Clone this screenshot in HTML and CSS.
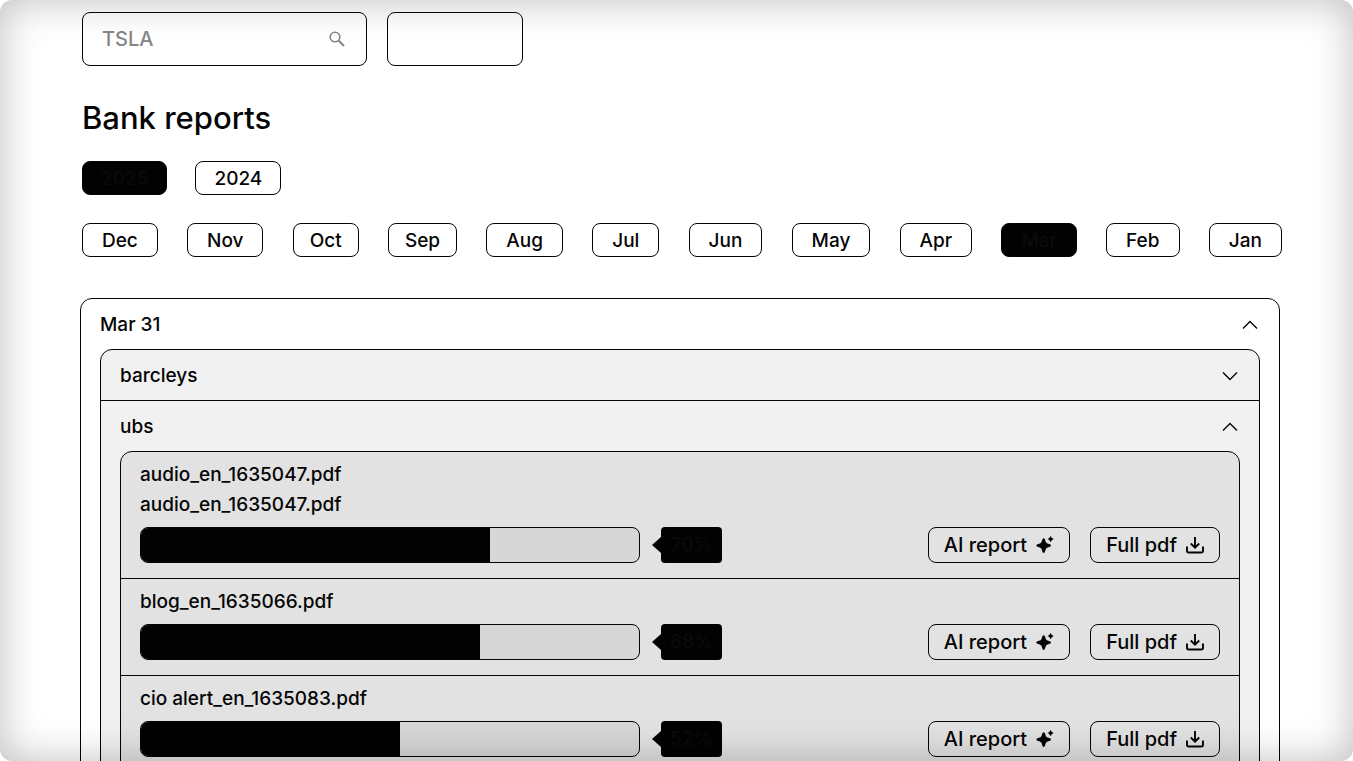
FILE: index.html
```html
<!DOCTYPE html>
<html lang="en">
<head>
    <meta charset="UTF-8">
    <meta name="viewport" content="width=device-width, initial-scale=1.0">
    <title>Bank reports</title>
    <link rel="stylesheet" href="styles.css">
</head>
<body>
    <!-- shared icons -->
    <svg class="sprite" aria-hidden="true">
        <symbol id="icon-chevron" viewBox="0 0 18 18">
            <path d="M2 12.5 L9 5.5 L16 12.5" fill="none" stroke="currentColor" stroke-width="1.4"/>
        </symbol>
        <symbol id="icon-sparkle" viewBox="0 0 18 18">
            <path d="M7.7 2.2 C9.3 2.2 9.2 5.4 10.4 6.7 C11.6 7.9 15 7.8 15 9.5 C15 11.2 11.6 11.1 10.4 12.3 C9.2 13.5 9.3 17 7.7 17 C6.1 17 6.2 13.5 5 12.3 C3.8 11.1 0.4 11.2 0.4 9.5 C0.4 7.8 3.8 7.9 5 6.7 C6.2 5.4 6.1 2.2 7.7 2.2 Z" fill="currentColor"/>
            <path d="M14.6 0.3 C15.4 0.3 15.3 1.6 15.8 2.1 C16.3 2.6 17.4 2.4 17.4 3.1 C17.4 3.8 16.3 3.7 15.8 4.2 C15.3 4.7 15.4 5.8 14.6 5.8 C13.8 5.8 13.9 4.7 13.4 4.2 C12.9 3.7 11.8 3.8 11.8 3.1 C11.8 2.4 12.9 2.6 13.4 2.1 C13.9 1.6 13.8 0.3 14.6 0.3 Z" fill="currentColor"/>
        </symbol>
        <symbol id="icon-download" viewBox="0 0 18 18">
            <path d="M9 1 V11.5 M4.8 7.5 L9 11.7 L13.2 7.5 M1 10.5 V15 Q1 16.5 2.7 16.5 H15.3 Q17 16.5 17 15 V10.5" fill="none" stroke="currentColor" stroke-width="1.9"/>
        </symbol>
    </svg>

    <main class="page">
        <div class="filters">
            <form class="search">
                <label class="search-box">
                    <input type="text" name="ticker" placeholder="TSLA" aria-label="Ticker">
                    <svg class="search-icon" viewBox="0 0 16 16" aria-hidden="true">
                        <circle cx="6" cy="6" r="4.8" fill="none" stroke="currentColor" stroke-width="1.6"/>
                        <path d="M9.5 9.5 L15 15" fill="none" stroke="currentColor" stroke-width="1.9"/>
                    </svg>
                </label>
                <button class="search-btn" type="submit" aria-label="Search"></button>
            </form>

            <h1>Bank reports</h1>

            <div class="years">
                <button class="chip active">2025</button>
                <button class="chip">2024</button>
            </div>

            <div class="months">
                <button class="chip">Dec</button>
                <button class="chip">Nov</button>
                <button class="chip narrow">Oct</button>
                <button class="chip narrow">Sep</button>
                <button class="chip">Aug</button>
                <button class="chip">Jul</button>
                <button class="chip">Jun</button>
                <button class="chip">May</button>
                <button class="chip">Apr</button>
                <button class="chip active">Mar</button>
                <button class="chip">Feb</button>
                <button class="chip">Jan</button>
            </div>
        </div>

        <section class="panel day">
            <button class="panel-header">Mar 31 <svg class="chevron"><use href="#icon-chevron"/></svg></button>

            <div class="panel banks">
                <button class="panel-header">barcleys <svg class="chevron down"><use href="#icon-chevron"/></svg></button>

                <div class="bank">
                    <button class="panel-header">ubs <svg class="chevron"><use href="#icon-chevron"/></svg></button>

                    <div class="panel reports">
                        <article class="report">
                            <p>audio_en_1635047.pdf</p>
                            <p>audio_en_1635047.pdf</p>
                            <div class="report-row">
                                <div class="bar"><div class="bar-fill" style="width: 70%"></div></div>
                                <span class="percent">70%</span>
                                <div class="actions">
                                    <button class="action">AI report <svg class="icon"><use href="#icon-sparkle"/></svg></button>
                                    <button class="action">Full pdf <svg class="icon"><use href="#icon-download"/></svg></button>
                                </div>
                            </div>
                        </article>

                        <article class="report">
                            <p>blog_en_1635066.pdf</p>
                            <div class="report-row">
                                <div class="bar"><div class="bar-fill" style="width: 68%"></div></div>
                                <span class="percent">68%</span>
                                <div class="actions">
                                    <button class="action">AI report <svg class="icon"><use href="#icon-sparkle"/></svg></button>
                                    <button class="action">Full pdf <svg class="icon"><use href="#icon-download"/></svg></button>
                                </div>
                            </div>
                        </article>

                        <article class="report">
                            <p>cio alert_en_1635083.pdf</p>
                            <div class="report-row">
                                <div class="bar"><div class="bar-fill" style="width: 52%"></div></div>
                                <span class="percent">52%</span>
                                <div class="actions">
                                    <button class="action">AI report <svg class="icon"><use href="#icon-sparkle"/></svg></button>
                                    <button class="action">Full pdf <svg class="icon"><use href="#icon-download"/></svg></button>
                                </div>
                            </div>
                        </article>
                    </div>
                </div>
            </div>
        </section>
    </main>
    <div class="vignette"></div>
</body>
</html>
```
FILE: styles.css
```css
* {
    margin: 0;
    padding: 0;
    box-sizing: border-box;
}

html {
    scrollbar-width: none;
}

body {
    font-family: Inter, sans-serif;
    font-size: 19px;
    font-weight: 500;
    line-height: 30px;
    color: #050505;
    background: #fff;
}

button,
input {
    font: inherit;
    color: inherit;
    background: none;
    border: none;
}

button {
    cursor: pointer;
}

.sprite {
    display: none;
}

.page {
    padding: 12px 73px 20px 80px;
}

.filters {
    margin: 0 -2px 0 2px;
}

.search {
    display: flex;
    gap: 20px;
}

.search-box {
    display: flex;
    align-items: center;
    width: 285px;
    height: 54px;
    padding: 0 21px 0 19px;
    border: 1px solid #050505;
    border-radius: 8px;
    color: #868686;
}

.search-box input {
    flex: 1;
    min-width: 0;
    font-size: 20px;
    outline: none;
}

.search-box input::placeholder {
    color: #868686;
    opacity: 1;
}

.search-icon {
    width: 16px;
    height: 16px;
}

.search-btn {
    width: 136px;
    border: 1px solid #050505;
    border-radius: 8px;
}

h1 {
    margin-top: 32px;
    font-size: 31px;
    font-weight: 500;
    line-height: 40px;
}

.years {
    display: flex;
    gap: 28px;
    margin-top: 23px;
}

.months {
    display: flex;
    justify-content: space-between;
    margin-top: 28px;
}

.chip {
    height: 34px;
    padding: 2px 19px 0;
    border: 1px solid #050505;
    border-radius: 8px;
}

.years .chip {
    padding: 2px 18px 0;
}

.chip.narrow {
    padding: 2px 16px 0;
}

.chip.active {
    color: #0a0a0a;
    background: #020202;
}

.panel {
    border: 1px solid #050505;
    border-radius: 12px;
}

.panel-header {
    display: flex;
    align-items: center;
    justify-content: space-between;
    width: 100%;
    height: 50px;
    padding: 1px 20px 0 19px;
    text-align: left;
}

.chevron {
    width: 18px;
    height: 18px;
}

.chevron.down {
    transform: rotate(180deg);
}

.day {
    margin-top: 41px;
    padding-bottom: 19px;
}

.banks {
    margin: 0 19px;
    padding-bottom: 19px;
    background: #f1f1f1;
}

.bank {
    border-top: 1px solid #050505;
}

.reports {
    margin: 0 19px;
    background: #e2e2e2;
}

.report {
    padding: 8px 19px 15px;
}

.report + .report {
    border-top: 1px solid #050505;
}

.report-row {
    display: flex;
    align-items: center;
    margin-top: 7px;
}

.bar {
    flex: 0 1 500px;
    height: 36px;
    border: 1px solid #050505;
    border-radius: 8px;
    background: #d7d7d7;
    overflow: hidden;
}

.bar-fill {
    height: 100%;
    background: #020202;
}

.percent {
    position: relative;
    width: 61px;
    margin-left: 21px;
    border-radius: 4px;
    line-height: 36px;
    text-align: center;
    color: #0a0a0a;
    background: #020202;
}

/* arrow pointing at the bar */
.percent::before {
    content: "";
    position: absolute;
    top: 10px;
    left: -9px;
    border: 8px solid transparent;
    border-left-width: 0;
    border-right: 9px solid #020202;
}

.actions {
    display: flex;
    gap: 20px;
    margin-left: auto;
}

.action {
    display: flex;
    align-items: center;
    gap: 9px;
    height: 36px;
    padding: 0 15px;
    border: 1px solid #050505;
    border-radius: 8px;
    font-size: 20px;
}

.icon {
    width: 18px;
    height: 18px;
}

.vignette {
    position: fixed;
    inset: 0;
    border-radius: 12px;
    box-shadow: inset 0 0 40px rgba(0, 0, 0, 0.26);
    pointer-events: none;
}
```
